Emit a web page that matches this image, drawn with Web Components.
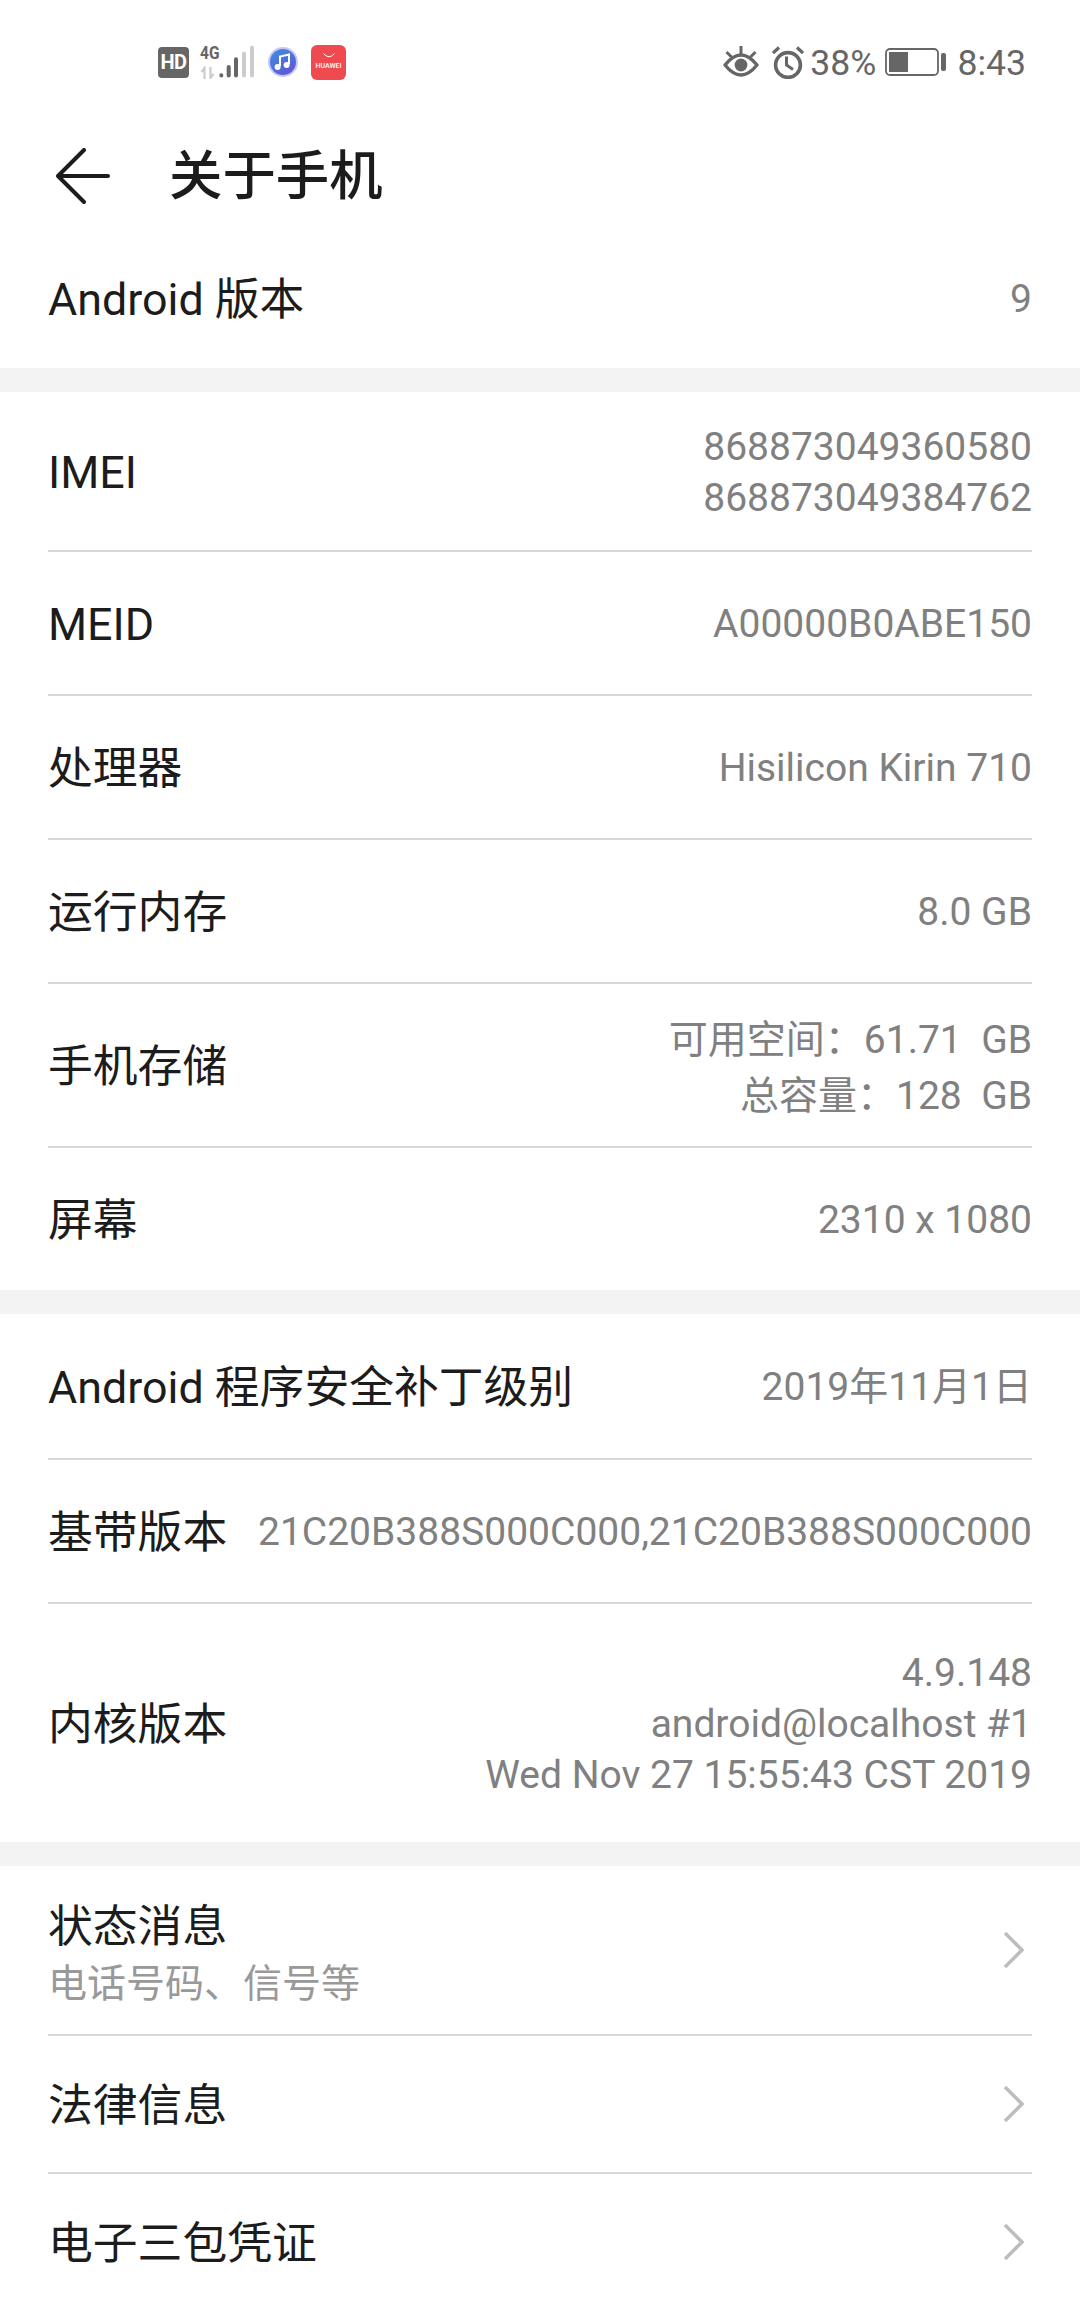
<!DOCTYPE html>
<html lang="zh-CN">
<head>
<meta charset="utf-8">
<title>关于手机</title>
<style>
    html, body { margin: 0; padding: 0; background: #f3f3f3; }
    body {
        width: 1080px;
        height: 2310px;
        overflow: hidden;
        font-family: Roboto, "Noto Sans CJK SC", sans-serif;
    }
    settings-page { height: 2310px; }
</style>
</head>
<body>
<settings-page>
    <status-bar></status-bar>
    <app-header>关于手机</app-header>

    <info-section>
        <info-row style="--h:140px"><span slot="label">Android 版本</span>9</info-row>
    </info-section>

    <info-section>
        <info-row style="--h:160px; --lh:51px; --shift:4px"><span slot="label">IMEI</span>868873049360580<br>868873049384762</info-row>
        <info-row><span slot="label">MEID</span>A00000B0ABE150</info-row>
        <info-row><span slot="label">处理器</span>Hisilicon Kirin 710</info-row>
        <info-row><span slot="label">运行内存</span>8.0 GB</info-row>
        <info-row style="--h:164px; --lh:56px; --shift:5px"><span slot="label">手机存储</span>可用空间：61.71&nbsp;&nbsp;GB<br>总容量：128&nbsp;&nbsp;GB</info-row>
        <info-row style="--h:142px"><span slot="label">屏幕</span>2310 x 1080</info-row>
    </info-section>

    <info-section>
        <info-row style="--h:146px"><span slot="label">Android 程序安全补丁级别</span>2019年11月1日</info-row>
        <info-row><span slot="label">基带版本</span>21C20B388S000C000,21C20B388S000C000</info-row>
        <info-row style="--h:238px; --lh:51px"><span slot="label">内核版本</span>4.9.148<br>android@localhost #1<br>Wed Nov 27 15:55:43 CST 2019</info-row>
    </info-section>

    <info-section>
        <nav-row style="--h:170px; --pt:11px; --gap:1px">状态消息<span slot="sub">电话号码、信号等</span></nav-row>
        <nav-row>法律信息</nav-row>
        <nav-row style="--h:136px">电子三包凭证</nav-row>
    </info-section>
</settings-page>

<script>
class SettingsPage extends HTMLElement {
    constructor() {
        super();
        this.attachShadow({ mode: 'open' });
        this.shadowRoot.innerHTML = `
        <style>
            :host { display: flex; flex-direction: column; background: #f3f3f3; overflow: hidden; }
            .top { display: flex; flex-direction: column; background: #fff; }
            .list { display: flex; flex-direction: column; gap: 24px; }
        </style>
        <div class="top"><slot name="top"></slot></div>
        <div class="list"><slot></slot></div>
        `;
    }

    connectedCallback() {
        // status bar and header sit in the white top block
        for (const el of this.children) {
            if (el.localName === 'status-bar' || el.localName === 'app-header') el.slot = 'top';
        }
    }
}

class StatusBar extends HTMLElement {
    constructor() {
        super();
        this.attachShadow({ mode: 'open' });
        this.shadowRoot.innerHTML = `
        <style>
            :host {
                display: flex;
                justify-content: space-between;
                align-items: center;
                height: 124px;
                padding: 0 54px 0 158px;
                box-sizing: border-box;
                background: #fff;
                color: #666;
                font-size: 35.6px;
            }
            .group { display: flex; align-items: center; }
            .group > span { padding-top: 2px; }
            svg { display: block; flex: none; }
            .hd {
                width: 31px;
                height: 31px;
                border-radius: 4px;
                background: #666;
                color: #fff;
                font-size: 20px;
                font-weight: 700;
                line-height: 31px;
                text-align: center;
                letter-spacing: -0.5px;
            }
            .net { display: flex; margin-left: 11px; width: 56px; height: 34px; }
            .net-left { width: 19px; display: flex; flex-direction: column; justify-content: space-between; }
            .g4 {
                display: block;
                font-size: 18px;
                font-weight: 700;
                line-height: 15px;
                transform: scaleX(0.86);
                transform-origin: left center;
                white-space: nowrap;
            }
            .store {
                display: flex;
                flex-direction: column;
                align-items: center;
                width: 35px;
                height: 35px;
                margin-left: 13px;
                border-radius: 6px;
                background: #ee4a50;
                color: #fff;
            }
            .store svg { margin-top: 8px; }
            .store span { margin-top: 3px; font-size: 7px; font-weight: 500; line-height: 9px; }
        </style>
        <div class="group">
            <div class="hd">HD</div>
            <div class="net">
                <div class="net-left">
                    <span class="g4">4G</span>
                    <svg width="19" height="13" viewBox="0 0 19 13">
                        <path d="M4.5 13V2L1.5 6M10.5 1V12L13.5 8" fill="none" stroke="#ccc" stroke-width="2.2"/>
                    </svg>
                </div>
                <svg width="37" height="34" viewBox="19 0 37 34">
                    <g stroke-width="4" stroke-linecap="round">
                        <path d="M21.3 30.3V30.4M28.7 22V30.4M36 14.3V30.4" stroke="#666"/>
                        <path d="M44 8.7V30.4M52 2.7V30.4" stroke="#ccc"/>
                    </g>
                </svg>
            </div>
            <svg width="30" height="30" viewBox="0 0 30 30" style="margin-left:12px">
                <defs>
                    <linearGradient id="mu" x1="0.2" y1="0" x2="0.8" y2="1">
                        <stop offset="0" stop-color="#3f8be0"/>
                        <stop offset="1" stop-color="#5f55d6"/>
                    </linearGradient>
                </defs>
                <circle cx="15" cy="15" r="15" fill="#c9c6f7"/>
                <circle cx="15" cy="15" r="13" fill="url(#mu)"/>
                <path d="M12 19V9.6L21 7.6V17" fill="none" stroke="#fff" stroke-width="2"/>
                <circle cx="9.6" cy="20" r="3" fill="#fff"/>
                <circle cx="18.6" cy="18" r="3" fill="#fff"/>
            </svg>
            <div class="store">
                <svg width="12" height="6" viewBox="0 0 12 6">
                    <path d="M0.5 0.5Q6 7 11.5 0.5" fill="none" stroke="#fff" stroke-width="1"/>
                </svg>
                <span>HUAWEI</span>
            </div>
        </div>
        <div class="group">
            <svg width="36" height="32" viewBox="0 0 36 32">
                <path d="M2 19Q18 -1 34 19Q18 39 2 19Z" fill="none" stroke="#666" stroke-width="3.4" stroke-linejoin="round"/>
                <circle cx="18" cy="19" r="6.4" fill="#666"/>
                <path d="M18 0V8M3.5 6L8.5 11M32.5 6L27.5 11" stroke="#666" stroke-width="3" fill="none"/>
            </svg>
            <svg width="32" height="33" viewBox="0 0 32 33" style="margin-left:13px">
                <circle cx="16" cy="19" r="12.4" fill="none" stroke="#666" stroke-width="3.6"/>
                <path d="M14.5 10.5V19L21 23.5" fill="none" stroke="#666" stroke-width="3"/>
                <path d="M1 7L7 1.5M25 1.5L31 7" fill="none" stroke="#666" stroke-width="3.2"/>
            </svg>
            <span style="margin-left:6px">38%</span>
            <svg width="61" height="28" viewBox="0 0 61 28" style="margin-left:9px">
                <rect x="1" y="1" width="52" height="26" rx="4" fill="none" stroke="#666" stroke-width="1.8"/>
                <rect x="4" y="4" width="19" height="20" fill="#666"/>
                <rect x="56" y="5" width="5" height="18" rx="2" fill="#666"/>
            </svg>
            <span style="margin-left:11px">8:43</span>
        </div>
        `;
    }
}

class AppHeader extends HTMLElement {
    constructor() {
        super();
        this.attachShadow({ mode: 'open' });
        this.shadowRoot.innerHTML = `
        <style>
            :host {
                display: flex;
                align-items: center;
                gap: 59px;
                height: 104px;
                padding-left: 56px;
                background: #fff;
                color: #1c1c1c;
            }
            svg { display: block; flex: none; }
            .title { padding-top: 2px; font-size: 53.4px; font-weight: 500; line-height: 60px; }
        </style>
        <svg width="54" height="56" viewBox="0 0 54 56">
            <path d="M28 2L2 28L28 54M2 28H52" fill="none" stroke="#1c1c1c" stroke-width="4" stroke-linecap="round" stroke-linejoin="round"/>
        </svg>
        <div class="title"><slot></slot></div>
        `;
    }
}

class InfoSection extends HTMLElement {
    constructor() {
        super();
        this.attachShadow({ mode: 'open' });
        this.shadowRoot.innerHTML = `
        <style>
            :host { display: flex; flex-direction: column; background: #fff; }
        </style>
        <slot></slot>
        `;
    }
}

class InfoRow extends HTMLElement {
    constructor() {
        super();
        this.attachShadow({ mode: 'open' });
        this.shadowRoot.innerHTML = `
        <style>
            :host { display: block; padding: 0 48px; background: #fff; }
            .inner {
                display: flex;
                justify-content: space-between;
                align-items: center;
                gap: 30px;
                height: var(--h, 144px);
                box-sizing: border-box;
                border-bottom: 2px solid #d8d8d8;
            }
            :host(:last-child) .inner { border-bottom: none; }
            .label {
                padding-top: 4px;
                font-size: 44.8px;
                line-height: 56px;
                color: #1c1c1c;
                white-space: nowrap;
                flex: none;
            }
            .value {
                padding-top: var(--shift, 2px);
                font-size: 39px;
                line-height: var(--lh, 51px);
                color: #808080;
                text-align: right;
                white-space: nowrap;
            }
        </style>
        <div class="inner">
            <div class="label"><slot name="label"></slot></div>
            <div class="value"><slot></slot></div>
        </div>
        `;
    }
}

class NavRow extends HTMLElement {
    constructor() {
        super();
        this.attachShadow({ mode: 'open' });
        this.shadowRoot.innerHTML = `
        <style>
            :host { display: block; padding: 0 48px; background: #fff; }
            .inner {
                display: flex;
                justify-content: space-between;
                align-items: center;
                height: var(--h, 138px);
                box-sizing: border-box;
                padding-right: 8px;
                border-bottom: 2px solid #d8d8d8;
            }
            :host(:last-child) .inner { border-bottom: none; }
            .text { display: flex; flex-direction: column; gap: var(--gap, 0); padding-top: var(--pt, 4px); }
            .main { font-size: 44.8px; line-height: 56px; color: #1c1c1c; }
            .sub { font-size: 39px; line-height: 56px; color: #999; }
            svg { display: block; flex: none; }
        </style>
        <div class="inner">
            <div class="text">
                <div class="main"><slot></slot></div>
                <div class="sub"><slot name="sub"></slot></div>
            </div>
            <svg width="21" height="38" viewBox="0 0 21 38">
                <path d="M2 2L19 19L2 36" fill="none" stroke="#bdbdbd" stroke-width="3.4"/>
            </svg>
        </div>
        `;
    }

    connectedCallback() {
        if (!this.querySelector('[slot="sub"]')) {
            this.shadowRoot.querySelector('.sub').style.display = 'none';
        }
    }
}

customElements.define('settings-page', SettingsPage);
customElements.define('status-bar', StatusBar);
customElements.define('app-header', AppHeader);
customElements.define('info-section', InfoSection);
customElements.define('info-row', InfoRow);
customElements.define('nav-row', NavRow);
</script>
</body>
</html>
